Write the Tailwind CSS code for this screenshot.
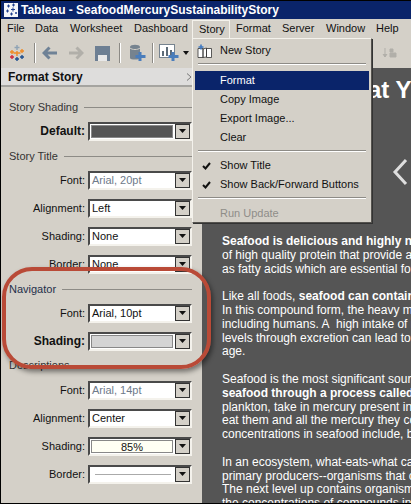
<!DOCTYPE html>
<html><head><meta charset="utf-8"><script src="https://cdn.jsdelivr.net/npm/@tailwindcss/browser@4"></script></head>
<body class="m-0 overflow-hidden">
<div class="relative w-[411px] h-[504px] overflow-hidden bg-[#d4d0c8] font-['Liberation_Sans',sans-serif] text-[11px] text-[#111] leading-none flex flex-col border-t border-l border-b border-black">
  <!-- title bar -->
  <div class="h-[18px] shrink-0 bg-[#0a246a] flex items-center gap-[3px] pl-[3px] text-white font-bold text-[12px] whitespace-nowrap">
    <svg width="14" height="14" viewBox="0 0 14 14"><rect width="14" height="14" fill="#f4f6fa"/><path d="M3 3h3M4.500 1.500v3M8 2h3M9.500.5v3M2 8h3M3.500 6.500v3M7 6.500h4M9 4.500v4M6 11h3M7.500 9.500v3M11 10h2M12 9v2" stroke="#1f3f8f" stroke-width="1"/></svg>
    <span>Tableau - SeafoodMercurySustainabilityStory</span>
  </div>
  <!-- menu bar -->
  <div class="h-[19px] shrink-0 flex items-center pl-[6px] whitespace-nowrap">
    <span class="w-[28px]">File</span><span class="w-[35px]">Data</span><span class="w-[64px]">Worksheet</span><span class="w-[58px]">Dashboard</span>
    <span class="w-[38px] h-[18px] border border-[#f4f2ec] border-b-0 flex items-center pl-[6px]">Story</span>
    <span class="w-[52px] pl-[6px]">Format</span><span class="w-[44px]">Server</span><span class="w-[50px]">Window</span><span>Help</span>
  </div>
  <!-- toolbar -->
  <div class="h-[30px] shrink-0 flex items-center pl-[7px]">
    <svg width="18" height="18" viewBox="0 0 18 18" fill="none" stroke-width="1.400"><path d="M9 1v5M6.500 3.500h5" stroke="#8fa3b5"/><path d="M9 7v5M5.500 9h7" stroke="#f08a24"/><path d="M4 6v4M2 8h4M14 5v4M12 7h4" stroke="#f08a24"/><path d="M4 11v4M2 13h4" stroke="#d2293d"/><path d="M14 11v4M12 13h4M9 13v4M7 15h4" stroke="#1f4f8f"/></svg>
    <div class="w-[2px] h-[20px] bg-[#8c8a85] border-r border-white ml-[8px]"></div>
    <svg class="ml-[6px]" width="16" height="14" viewBox="0 0 16 14"><path d="M15 7H3M7.500 1.500 2 7l5.500 5.500" fill="none" stroke="#6f8296" stroke-width="3"/></svg>
    <svg class="ml-[10px]" width="16" height="14" viewBox="0 0 16 14"><path d="M1 7h12M8.500 1.500 14 7l-5.500 5.500" fill="none" stroke="#b1afa9" stroke-width="3"/></svg>
    <svg class="ml-[11px]" width="15" height="15" viewBox="0 0 15 15"><rect width="15" height="15" fill="#6d7f93"/><rect x="3" y="9" width="9" height="6" fill="#e8e8e8"/></svg>
    <div class="w-[2px] h-[20px] bg-[#8c8a85] border-r border-white ml-[9px]"></div>
    <svg class="ml-[8px]" width="17" height="18" viewBox="0 0 17 18"><path d="M1 3c0-3 10-3 10 0v11c0 2-10 2-10 0z" fill="#76838f"/><path d="M1 4c2 2 8 2 10 0" stroke="#d4d0c8" fill="none"/><path d="M11 8v9M6.500 12.500h10" stroke="#4a7dbb" stroke-width="3"/></svg>
    <div class="w-[2px] h-[20px] bg-[#8c8a85] border-r border-white ml-[6px]"></div>
    <svg class="ml-[5px]" width="20" height="18" viewBox="0 0 20 18"><rect x=".5" y=".5" width="15" height="13" fill="#fff" stroke="#76838f"/><path d="M3 12V7h2v5zM7 12V3h2v9zM11 12V6h2v6z" fill="#5d6b78"/><path d="M14 8v9M9.500 12.500h10" stroke="#4a7dbb" stroke-width="3"/></svg>
    <svg class="ml-[4px]" width="6" height="4" viewBox="0 0 6 4"><path d="M0 0h6L3 4z" fill="#111"/></svg>
    <svg class="absolute left-[381px] top-[46px]" width="16" height="14" viewBox="0 0 16 14"><path d="M3 1v9M1 7l2 3 2-3M8 2h3v3H8zM8 6h6v4H8z" fill="#b1afa9" stroke="#b1afa9"/></svg>
  </div>
  <!-- body -->
  <div class="flex-1 flex min-h-0">
    <!-- format panel -->
    <div class="w-[201px] shrink-0 flex flex-col">
      <div class="h-[19px] shrink-0 w-[193px] bg-[#dedddc] border-b-2 border-[#a5a4a0] flex items-center justify-between pl-[7px] pr-[2px] font-bold text-[12px]"><span>Format Story</span><svg width="6" height="8" viewBox="0 0 6 8"><path d="M1 .5 5 4 1 7.500" fill="none" stroke="#777"/></svg></div>
      <div class="w-[191px] flex flex-col pl-[8px] pt-[11px]">
        <div class="flex items-center gap-[6px] h-[18px] text-[#333]"><span>Story Shading</span><div class="flex-1 h-px bg-[#8d8b86]"></div></div>
        <div class="flex items-center h-[28px] justify-end gap-[3px] mt-[1px]"><span class="font-bold text-[12px]">Default:</span>
          <div class="w-[104px] h-[19px] bg-white border-2 border-[#4a4a4a] border-b-[#f4f2ec] border-r-[#f4f2ec] flex items-center pl-[1px]"><div class="flex-1 h-[13px] bg-[#555] border border-[#888]"></div><div class="w-[15px] h-[15px] bg-[#d4d0c8] border border-[#333] flex items-center justify-center ml-[2px]"><svg width="7" height="4" viewBox="0 0 7 4"><path d="M0 0h7L3.500 4z" fill="#111"/></svg></div></div></div>
        <div class="flex items-center gap-[6px] h-[18px] mt-[2px] text-[#333]"><span>Story Title</span><div class="flex-1 h-px bg-[#8d8b86]"></div></div>
        <div class="flex items-center h-[28px] justify-end gap-[3px] mt-[1px]"><span>Font:</span>
          <div class="w-[104px] h-[19px] bg-white border-2 border-[#4a4a4a] border-b-[#f4f2ec] border-r-[#f4f2ec] flex items-center pl-[2px]"><span class="flex-1 text-[#6e7a8a]">Arial, 20pt</span><div class="w-[15px] h-[15px] bg-[#d4d0c8] border border-[#333] flex items-center justify-center"><svg width="7" height="4" viewBox="0 0 7 4"><path d="M0 0h7L3.500 4z" fill="#111"/></svg></div></div></div>
        <div class="flex items-center h-[28px] justify-end gap-[3px]"><span>Alignment:</span>
          <div class="w-[104px] h-[19px] bg-white border-2 border-[#4a4a4a] border-b-[#f4f2ec] border-r-[#f4f2ec] flex items-center pl-[2px]"><span class="flex-1">Left</span><div class="w-[15px] h-[15px] bg-[#d4d0c8] border border-[#333] flex items-center justify-center"><svg width="7" height="4" viewBox="0 0 7 4"><path d="M0 0h7L3.500 4z" fill="#111"/></svg></div></div></div>
        <div class="flex items-center h-[28px] justify-end gap-[3px]"><span>Shading:</span>
          <div class="w-[104px] h-[19px] bg-white border-2 border-[#4a4a4a] border-b-[#f4f2ec] border-r-[#f4f2ec] flex items-center pl-[2px]"><span class="flex-1">None</span><div class="w-[15px] h-[15px] bg-[#d4d0c8] border border-[#333] flex items-center justify-center"><svg width="7" height="4" viewBox="0 0 7 4"><path d="M0 0h7L3.500 4z" fill="#111"/></svg></div></div></div>
        <div class="flex items-center h-[28px] justify-end gap-[3px]"><span>Border:</span>
          <div class="w-[104px] h-[19px] bg-white border-2 border-[#4a4a4a] border-b-[#f4f2ec] border-r-[#f4f2ec] flex items-center pl-[2px]"><span class="flex-1">None</span><div class="w-[15px] h-[15px] bg-[#d4d0c8] border border-[#333] flex items-center justify-center"><svg width="7" height="4" viewBox="0 0 7 4"><path d="M0 0h7L3.500 4z" fill="#111"/></svg></div></div></div>
        <div class="flex items-center gap-[6px] h-[18px] mt-[2px] text-[#1f2f4a]"><span>Navigator</span><div class="flex-1 h-px bg-[#8d8b86]"></div></div>
        <div class="flex items-center h-[28px] justify-end gap-[3px] mt-[1px]"><span>Font:</span>
          <div class="w-[104px] h-[19px] bg-white border-2 border-[#4a4a4a] border-b-[#f4f2ec] border-r-[#f4f2ec] flex items-center pl-[2px]"><span class="flex-1">Arial, 10pt</span><div class="w-[15px] h-[15px] bg-[#d4d0c8] border border-[#333] flex items-center justify-center"><svg width="7" height="4" viewBox="0 0 7 4"><path d="M0 0h7L3.500 4z" fill="#111"/></svg></div></div></div>
        <div class="flex items-center h-[28px] justify-end gap-[3px]"><span class="font-bold text-[12px]">Shading:</span>
          <div class="w-[104px] h-[19px] bg-white border-2 border-[#4a4a4a] border-b-[#f4f2ec] border-r-[#f4f2ec] flex items-center pl-[1px]"><div class="flex-1 h-[13px] bg-[#d4d4d4] border border-[#888]"></div><div class="w-[15px] h-[15px] bg-[#d4d0c8] border border-[#333] flex items-center justify-center ml-[2px]"><svg width="7" height="4" viewBox="0 0 7 4"><path d="M0 0h7L3.500 4z" fill="#111"/></svg></div></div></div>
        <div class="flex items-center gap-[6px] h-[18px] mt-[1px] text-[#333]"><span>Descriptions</span><div class="flex-1 h-px bg-[#8d8b86]"></div></div>
        <div class="flex items-center h-[28px] justify-end gap-[3px] mt-[2px]"><span>Font:</span>
          <div class="w-[104px] h-[19px] bg-white border-2 border-[#4a4a4a] border-b-[#f4f2ec] border-r-[#f4f2ec] flex items-center pl-[2px]"><span class="flex-1 text-[#6e7a8a]">Arial, 14pt</span><div class="w-[15px] h-[15px] bg-[#d4d0c8] border border-[#333] flex items-center justify-center"><svg width="7" height="4" viewBox="0 0 7 4"><path d="M0 0h7L3.500 4z" fill="#111"/></svg></div></div></div>
        <div class="flex items-center h-[28px] justify-end gap-[3px]"><span>Alignment:</span>
          <div class="w-[104px] h-[19px] bg-white border-2 border-[#4a4a4a] border-b-[#f4f2ec] border-r-[#f4f2ec] flex items-center pl-[2px]"><span class="flex-1">Center</span><div class="w-[15px] h-[15px] bg-[#d4d0c8] border border-[#333] flex items-center justify-center"><svg width="7" height="4" viewBox="0 0 7 4"><path d="M0 0h7L3.500 4z" fill="#111"/></svg></div></div></div>
        <div class="flex items-center h-[28px] justify-end gap-[3px]"><span>Shading:</span>
          <div class="w-[104px] h-[19px] bg-white border-2 border-[#4a4a4a] border-b-[#f4f2ec] border-r-[#f4f2ec] flex items-center pl-[1px]"><div class="flex-1 h-[13px] bg-[#fffff4] border border-[#888] text-center leading-[12px]">85%</div><div class="w-[15px] h-[15px] bg-[#d4d0c8] border border-[#333] flex items-center justify-center ml-[2px]"><svg width="7" height="4" viewBox="0 0 7 4"><path d="M0 0h7L3.500 4z" fill="#111"/></svg></div></div></div>
        <div class="flex items-center h-[28px] justify-end gap-[3px]"><span>Border:</span>
          <div class="w-[104px] h-[19px] bg-white border-2 border-[#4a4a4a] border-b-[#f4f2ec] border-r-[#f4f2ec] flex items-center pl-[5px]"><div class="flex-1 h-px bg-[#aaa] mr-[4px]"></div><div class="w-[15px] h-[15px] bg-[#d4d0c8] border border-[#333] flex items-center justify-center"><svg width="7" height="4" viewBox="0 0 7 4"><path d="M0 0h7L3.500 4z" fill="#111"/></svg></div></div></div>
      </div>
    </div>
    <!-- story content -->
    <div class="flex-1 bg-[#555555] text-white relative overflow-hidden">
      <div class="absolute left-[166px] top-[10px] text-[24px] font-bold whitespace-nowrap">at Y</div>
      <svg class="absolute left-[190px] top-[90px]" width="16" height="28" viewBox="0 0 16 28"><path d="M14 2 3 14l11 12" fill="none" stroke="#dedede" stroke-width="3"/></svg>
      <div class="absolute left-[20px] top-[167px] w-[400px] text-[12px] leading-[13.800px] whitespace-nowrap">
        <p class="font-bold">Seafood is delicious and highly nutritious</p>
        <p>of high quality protein that provide all the</p>
        <p>as fatty acids which are essential for good</p>
        <p class="mt-[13.800px]">Like all foods, <b>seafood can contain mercury</b></p>
        <p>In this compound form, the heavy metal is</p>
        <p>including humans. A&nbsp; high intake of mercury</p>
        <p>levels through excretion can lead to problems</p>
        <p>age.</p>
        <p class="mt-[13.800px]">Seafood is the most significant source of</p>
        <p class="font-bold">seafood through a process called biomagnification</p>
        <p>plankton, take in mercury present in the water</p>
        <p>eat them and all the mercury they contain</p>
        <p>concentrations in seafood include, but are not</p>
        <p class="mt-[13.800px]">In an ecosystem, what-eats-what can be shown</p>
        <p>primary producers--organisms that can produce</p>
        <p>The next level up contains organisms that eat</p>
        <p>the concentrations of compounds increase</p>
      </div>
    </div>
  </div>
  <!-- story menu -->
  <div class="absolute left-[191px] top-[37px] w-[180px] h-[185px] bg-[#d4d0c8] border border-[#f4f2ec] border-r-[#55534f] border-b-[#55534f] shadow-[1px_1px_0_#333] flex flex-col px-[2px] pt-[2px] whitespace-nowrap">
    <div class="h-[19px] flex items-center pl-[2px] gap-[7px] shrink-0">
      <svg width="16" height="14" viewBox="0 0 16 14"><path d="M1 4.500h5v9H1zM9.500 4.500h5v9h-5zM6 5l3.500-1v9L6 13.500z" fill="#fff" stroke="#333" stroke-width=".8"/><path d="M4 .5v5M1.500 3h5" stroke="#3f78c0" stroke-width="1.600"/></svg>
      <span>New Story</span></div>
    <div class="h-[2px] mx-[3px] my-[3px] shrink-0 bg-[#8d8b86] border-b border-white"></div>
    <div class="h-[19px] flex items-center pl-[25px] bg-[#0a246a] text-white shrink-0 mt-[3px]">Format</div>
    <div class="h-[19px] flex items-center pl-[25px] shrink-0">Copy Image</div>
    <div class="h-[19px] flex items-center pl-[25px] shrink-0">Export Image...</div>
    <div class="h-[19px] flex items-center pl-[25px] shrink-0">Clear</div>
    <div class="h-[2px] mx-[3px] my-[3px] shrink-0 bg-[#8d8b86] border-b border-white"></div>
    <div class="h-[19px] flex items-center pl-[7px] gap-[9px] shrink-0 mt-[1px]"><svg width="9" height="8" viewBox="0 0 9 8"><path d="M1 4l2.500 2.500L8 1" fill="none" stroke="#111" stroke-width="2"/></svg><span>Show Title</span></div>
    <div class="h-[19px] flex items-center pl-[7px] gap-[9px] shrink-0"><svg width="9" height="8" viewBox="0 0 9 8"><path d="M1 4l2.500 2.500L8 1" fill="none" stroke="#111" stroke-width="2"/></svg><span>Show Back/Forward Buttons</span></div>
    <div class="h-[2px] mx-[3px] my-[3px] shrink-0 bg-[#8d8b86] border-b border-white"></div>
    <div class="h-[19px] flex items-center pl-[25px] shrink-0 text-[#8f8d88] mt-[2px]">Run Update</div>
  </div>
  <!-- annotation -->
  <div class="absolute left-[1px] top-[266px] w-[209px] h-[102px] rounded-[30px] border-[4px] border-[#b94a37] shadow-[2px_3px_5px_rgba(0,0,0,0.45)]"></div>
</div>
</body></html>
